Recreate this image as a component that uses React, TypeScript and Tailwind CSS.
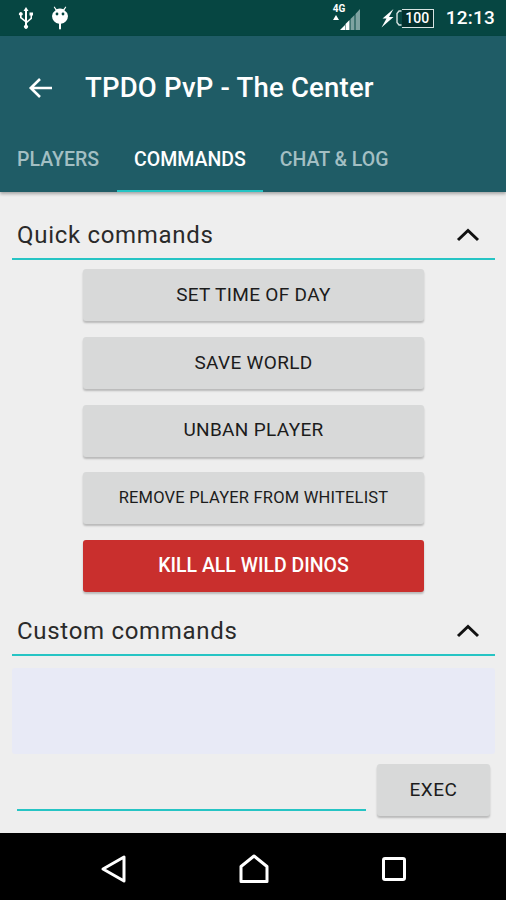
import React from "react";

const Btn = ({ label, cls = "bg-[#d8d9d9] text-[#1c1c1c] text-[19px] tracking-[0.33px]" }: { label: string; cls?: string }) => (
  <div className={`flex h-[52px] w-[341px] items-center justify-center rounded-[3px] shadow-[0_2px_2px_rgba(0,0,0,0.22)] ${cls}`}>
    {label}
  </div>
);

const Chevron = () => (
  <svg width="24" height="16" viewBox="0 0 24 16" fill="none" stroke="#111" strokeWidth="3" strokeLinecap="butt">
    <path d="M2 13 L12 3.5 L22 13" />
  </svg>
);

const Section = ({ title }: { title: string }) => (
  <div className="ml-3 mr-[11px] flex h-[48px] items-center justify-between border-b-2 border-[#26c4c4] pl-[5px] pr-[15px]">
    <span className="text-[24px] tracking-[0.7px] text-[#2a2a2a]">{title}</span>
    <Chevron />
  </div>
);

export default function App() {
  return (
    <div className="flex h-[900px] w-[506px] flex-col overflow-hidden bg-[#eeeeee] font-['Roboto',sans-serif]">
      {/* Status bar */}
      <div className="flex h-[36px] items-center justify-between bg-[#064642] pl-[17px] pr-[11px] text-white">
        <div className="flex items-center gap-[16px]">
          <svg width="18" height="22" viewBox="0 0 18 22" fill="white">
            <path d="M9 0 L11.5 4 H10 V14 L13.5 11 V8.5 H12.5 V5.5 H16 V8.5 H15 V11.8 L10 16 V18 A2 2 0 1 1 8 18 V15 L3 11 V8.6 A1.8 1.8 0 1 1 4.6 8.6 V10.2 L8 13 V4 H6.5 Z" />
          </svg>
          <svg width="18" height="24" viewBox="0 0 18 24" fill="white">
            <path d="M3.5 0.5 L5.6 3.3 A8 8 0 0 1 12.4 3.3 L14.5 0.5 L15.3 1 L13.4 4.2 A8 8 0 0 1 17 10 A8 8 0 0 1 10 17.8 V22.5 A1 1 0 0 1 8 22.5 V17.8 A8 8 0 0 1 1 10 A8 8 0 0 1 4.6 4.2 L2.7 1 Z" />
            <circle cx="6" cy="8" r="1.4" fill="#064642" />
            <circle cx="12" cy="8" r="1.4" fill="#064642" />
          </svg>
        </div>
        <div className="flex items-center">
          <div className="relative h-[32px] w-[31px]">
            <span className="absolute left-[3px] top-[-1px] text-[10px] font-bold">4G</span>
            <svg className="absolute left-0 top-[6px]" width="31" height="26" viewBox="0 0 31 26">
              <path d="M6 7 L9 12 H3 Z" fill="white" />
              <path d="M10 22 L15 17 V22 Z" fill="white" />
              <path d="M15.5 22 V16 L19.5 12 V22 Z" fill="white" />
              <path d="M20.5 22 V11 L24.5 7 V22 Z" fill="#7fa3a1" />
              <path d="M25.5 22 V6 L30 1 V22 Z" fill="#7fa3a1" />
            </svg>
          </div>
          <svg className="ml-[20px]" width="13" height="19" viewBox="0 0 13 19" fill="white">
            <path d="M12.5 0 L1.5 9.5 H5.5 L0.5 18.5 L12.5 8 H8 Z" />
          </svg>
          <svg className="ml-[2px]" width="6" height="16" viewBox="0 0 6 16" fill="none" stroke="#d7e3e2" strokeWidth="1.4">
            <path d="M5.5 1 H3 L1 3.5 V12.5 L3 15 H5.5" />
          </svg>
          <div className="flex h-[19px] w-[32px] items-center justify-center border-[1.5px] border-l-0 border-[#d7e3e2] bg-[#03302d] text-[14px] font-medium leading-none">
            100
          </div>
          <span className="ml-[12px] text-[19px] font-medium tracking-[0.2px]">12:13</span>
        </div>
      </div>

      {/* App bar */}
      <div className="bg-[#1f5c66] shadow-[0_2px_3px_rgba(0,0,0,0.3)]">
        <div className="flex h-[104px] items-center pl-[28px] text-white">
          <svg width="24" height="22" viewBox="0 0 24 22" fill="none" stroke="white" strokeWidth="2.6">
            <path d="M24 11 H3 M12 2 L2.8 11 L12 20" />
          </svg>
          <span className="ml-[33px] text-[27.5px] font-medium tracking-[0.2px]">TPDO PvP - The Center</span>
        </div>
        <div className="flex h-[52px] text-[19.5px] font-medium">
          <div className="flex items-center border-b-2 border-transparent pb-[11px] pl-[17px] pr-[18px] text-[#a3bfc3]">PLAYERS</div>
          <div className="flex items-center border-b-2 border-[#26c4c4] px-[17px] pb-[11px] text-white">COMMANDS</div>
          <div className="flex items-center border-b-2 border-transparent px-[17px] pb-[11px] text-[#a3bfc3]">CHAT &amp; LOG</div>
        </div>
      </div>

      {/* Content */}
      <div className="flex flex-1 flex-col pt-[20px]">
        <Section title="Quick commands" />
        <div className="mt-[9px] flex flex-col items-center gap-[15.75px] pl-[1px]">
          <Btn label="SET TIME OF DAY" />
          <Btn label="SAVE WORLD" />
          <Btn label="UNBAN PLAYER" />
          <Btn label="REMOVE PLAYER FROM WHITELIST" cls="bg-[#d8d9d9] text-[#1c1c1c] text-[16.5px] tracking-[0.2px]" />
          <Btn label="KILL ALL WILD DINOS" cls="bg-[#c92f2d] text-white text-[19.5px] font-medium" />
        </div>
        <div className="mt-[16px]">
          <Section title="Custom commands" />
        </div>
        <div className="ml-3 mr-[11px] mt-[12px] h-[86px] rounded-[3px] bg-[#e8eaf6]" />
        <div className="mt-[10px] flex items-end pl-[17px] pr-[16px]">
          <div className="mb-[5px] h-[2px] w-[349px] bg-[#26c4c4]" />
          <div className="ml-[11px] flex h-[52px] w-[113px] items-center justify-center rounded-[3px] bg-[#d8d9d9] text-[19px] tracking-[0.5px] text-[#1c1c1c] shadow-[0_2px_2px_rgba(0,0,0,0.22)]">
            EXEC
          </div>
        </div>
      </div>

      {/* Nav bar */}
      <div className="flex h-[67px] items-center bg-black pl-[100px] pt-[5px]">
        <svg width="28" height="30" viewBox="0 0 28 30" fill="none" stroke="white" strokeWidth="3" strokeLinejoin="round">
          <path d="M24 3 V27 L3 15 Z" />
        </svg>
        <svg className="ml-[111px]" width="30" height="30" viewBox="0 0 30 30" fill="none" stroke="white" strokeWidth="3" strokeLinejoin="round">
          <path d="M2 27.5 V12.5 L15 2 L28 12.5 V27.5 Z" />
        </svg>
        <svg className="ml-[113px]" width="24" height="24" viewBox="0 0 24 24" fill="none" stroke="white" strokeWidth="3" strokeLinejoin="round">
          <rect x="1.5" y="1.5" width="21" height="21" rx="1.5" />
        </svg>
      </div>
    </div>
  );
}
